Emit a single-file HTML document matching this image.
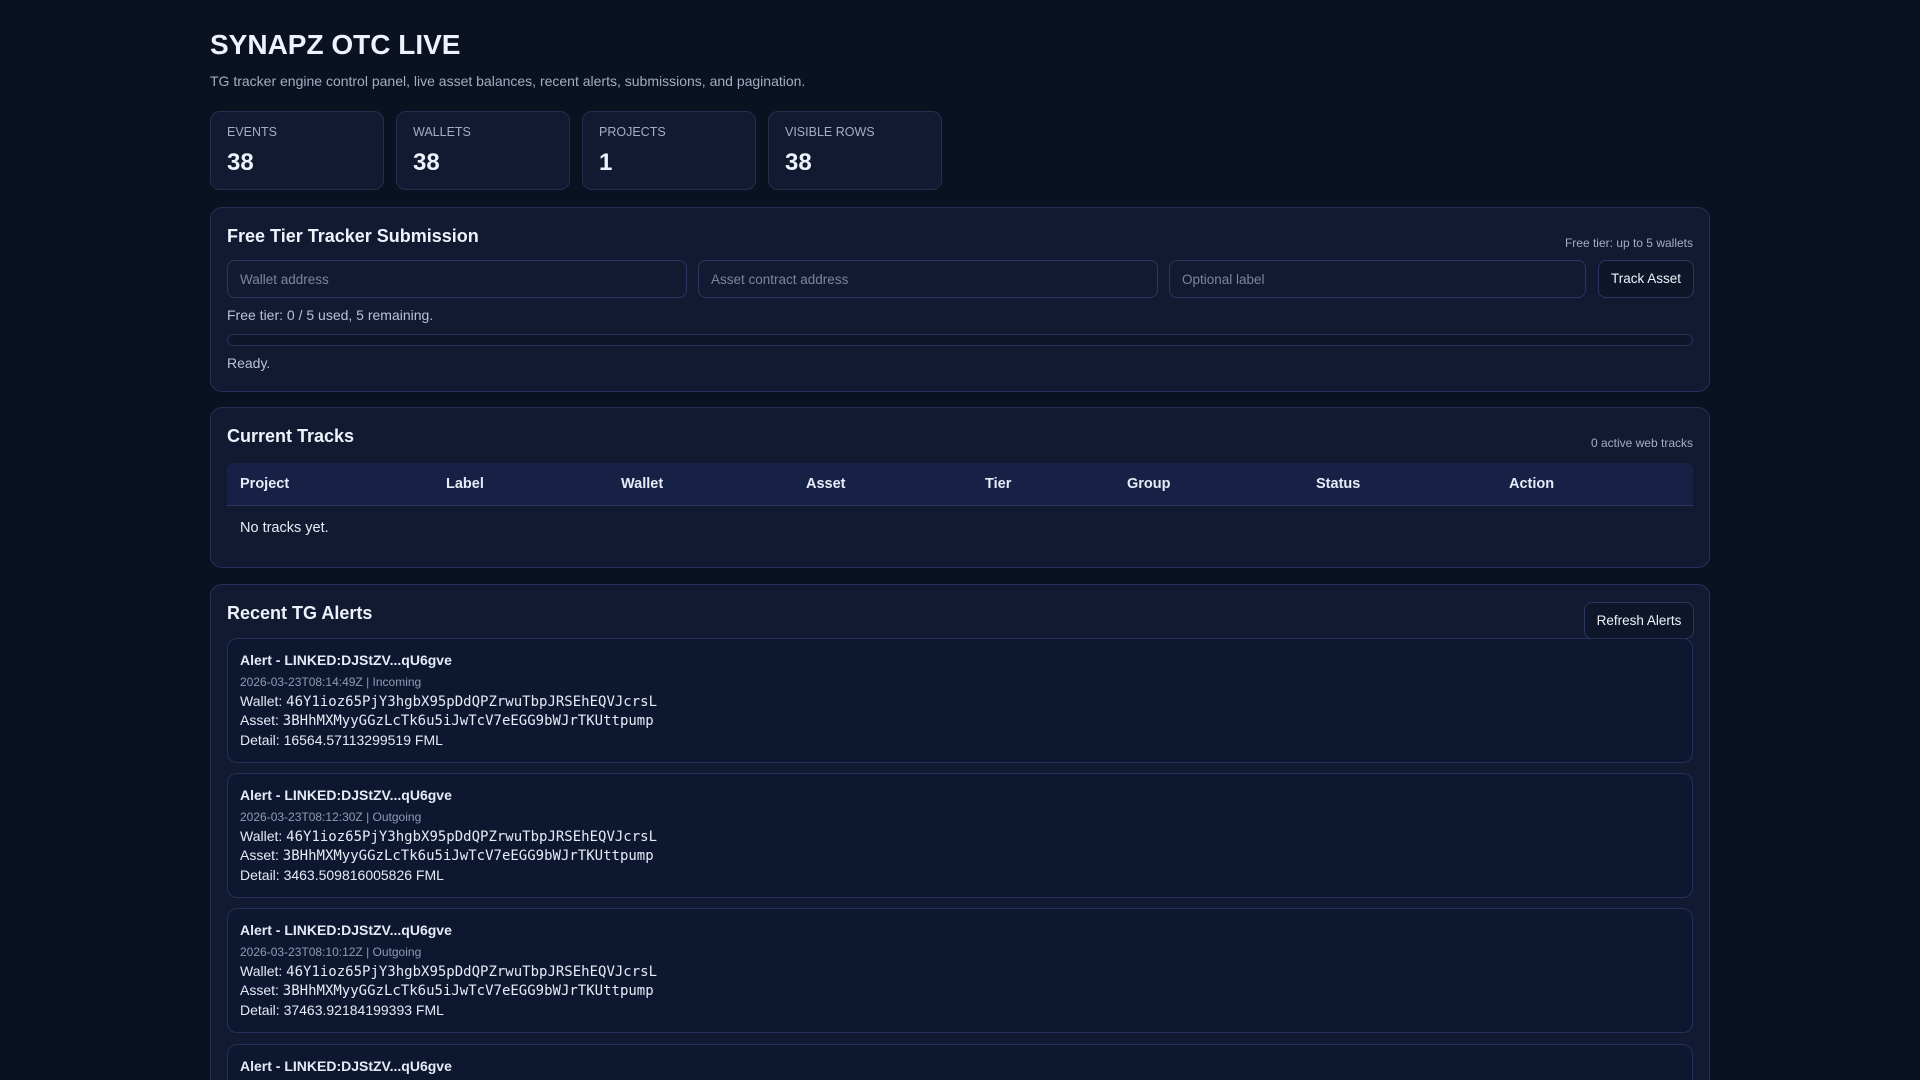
<!DOCTYPE html>
<html style="width:1920px;height:1080px;overflow:hidden"><head><meta charset="utf-8"><style>
*{box-sizing:border-box;margin:0;padding:0}
body{width:1920px;height:1080px;overflow:hidden;background:#0a1120;font-family:"Liberation Sans",sans-serif;color:#e6ebf7;position:relative}
.a{position:absolute}
h1{position:absolute;left:210px;top:29px;font-size:28px;font-weight:700;color:#eef2fc}
.sub{left:210px;top:73px;font-size:14px;color:#a3adc4}
.card{position:absolute;top:111px;width:174px;height:79px;background:#111a30;border:1px solid #243050;border-radius:10px}
.card .l{position:absolute;left:16px;top:13px;font-size:12.5px;color:#a3adc4}
.card .n{position:absolute;left:16px;top:37px;font-size:24px;font-weight:700;color:#eef2fc}
.panel{position:absolute;left:210px;width:1500px;background:#111a30;border:1px solid #24305a;border-radius:12px}
.h2{position:absolute;left:16px;font-size:18px;font-weight:700;color:#eef2fc}
.r{position:absolute;right:16px;font-size:12px;color:#a3adc4}
.inp{position:absolute;top:52px;height:38px;border:1px solid #2a3660;border-radius:8px;background:#111a30;font-size:13.5px;color:#7c8599;padding:11px 12px}
.btn{position:absolute;border:1px solid #2a3660;border-radius:8px;background:#0e1629;font-size:13.5px;color:#eef2fc;text-align:center}
.th{position:absolute;top:0;font-size:14.5px;font-weight:700;color:#e6ebf7;line-height:42px}
.al{position:absolute;left:16px;width:1466px;height:125px;background:#0e1730;border:1px solid #24305a;border-radius:10px}
.al div{position:absolute;left:12px;font-size:14px;color:#e6ebf7;white-space:nowrap}
.al .t{top:13px;font-weight:700}
.al .m{top:36px;font-size:12px;color:#8f9ab3}
.mono{font-family:"DejaVu Sans Mono",monospace;font-size:14px}
</style></head><body>
<h1>SYNAPZ OTC LIVE</h1>
<div class="a sub">TG tracker engine control panel, live asset balances, recent alerts, submissions, and pagination.</div>
<div class="card" style="left:210px"><div class="l">EVENTS</div><div class="n">38</div></div>
<div class="card" style="left:396px"><div class="l">WALLETS</div><div class="n">38</div></div>
<div class="card" style="left:582px"><div class="l">PROJECTS</div><div class="n">1</div></div>
<div class="card" style="left:768px"><div class="l">VISIBLE ROWS</div><div class="n">38</div></div>

<div class="panel" style="top:207px;height:185px">
<div class="h2" style="top:18px">Free Tier Tracker Submission</div>
<div class="r" style="top:28px">Free tier: up to 5 wallets</div>
<div class="inp" style="left:16px;width:460px">Wallet address</div>
<div class="inp" style="left:487px;width:460px">Asset contract address</div>
<div class="inp" style="left:958px;width:417px">Optional label</div>
<div class="btn" style="left:1387px;top:52px;width:96px;height:38px;line-height:36px">Track Asset</div>
<div class="a" style="left:16px;top:99px;font-size:14px;color:#b8c1d6">Free tier: 0 / 5 used, 5 remaining.</div>
<div class="a" style="left:16px;top:126px;width:1466px;height:12px;border:1px solid #24305a;border-radius:6px;background:#0e1629"></div>
<div class="a" style="left:16px;top:147px;font-size:14px;color:#b8c1d6">Ready.</div>
</div>

<div class="panel" style="top:407px;height:161px">
<div class="h2" style="top:18px">Current Tracks</div>
<div class="r" style="top:28px">0 active web tracks</div>
<div class="a" style="left:16px;top:55px;width:1466px;height:43px;background:#172146;border-bottom:1px solid #2a3660;border-radius:6px 6px 0 0">
<div class="th" style="left:13px">Project</div><div class="th" style="left:219px">Label</div><div class="th" style="left:394px">Wallet</div><div class="th" style="left:579px">Asset</div><div class="th" style="left:758px">Tier</div><div class="th" style="left:900px">Group</div><div class="th" style="left:1089px">Status</div><div class="th" style="left:1282px">Action</div>
</div>
<div class="a" style="left:29px;top:112px;font-size:14.5px;color:#e6ebf7">No tracks yet.</div>
</div>

<div class="panel" style="top:584px;height:496px;overflow:hidden;border-bottom:none;border-radius:12px 12px 0 0">
<div class="h2" style="top:18px">Recent TG Alerts</div>
<div class="btn" style="left:1373px;top:17px;width:110px;height:37px;line-height:35px">Refresh Alerts</div>
<div class="al" style="top:53px"><div class="t">Alert - LINKED:DJStZV...qU6gve</div><div class="m">2026-03-23T08:14:49Z | Incoming</div><div style="top:54px">Wallet: <span class="mono">46Y1ioz65PjY3hgbX95pDdQPZrwuTbpJRSEhEQVJcrsL</span></div><div style="top:73px">Asset: <span class="mono">3BHhMXMyyGGzLcTk6u5iJwTcV7eEGG9bWJrTKUttpump</span></div><div style="top:93px">Detail: 16564.57113299519 FML</div></div>
<div class="al" style="top:188px"><div class="t">Alert - LINKED:DJStZV...qU6gve</div><div class="m">2026-03-23T08:12:30Z | Outgoing</div><div style="top:54px">Wallet: <span class="mono">46Y1ioz65PjY3hgbX95pDdQPZrwuTbpJRSEhEQVJcrsL</span></div><div style="top:73px">Asset: <span class="mono">3BHhMXMyyGGzLcTk6u5iJwTcV7eEGG9bWJrTKUttpump</span></div><div style="top:93px">Detail: 3463.509816005826 FML</div></div>
<div class="al" style="top:323px"><div class="t">Alert - LINKED:DJStZV...qU6gve</div><div class="m">2026-03-23T08:10:12Z | Outgoing</div><div style="top:54px">Wallet: <span class="mono">46Y1ioz65PjY3hgbX95pDdQPZrwuTbpJRSEhEQVJcrsL</span></div><div style="top:73px">Asset: <span class="mono">3BHhMXMyyGGzLcTk6u5iJwTcV7eEGG9bWJrTKUttpump</span></div><div style="top:93px">Detail: 37463.92184199393 FML</div></div>
<div class="al" style="top:459px"><div class="t">Alert - LINKED:DJStZV...qU6gve</div></div>
</div>
</body></html>
